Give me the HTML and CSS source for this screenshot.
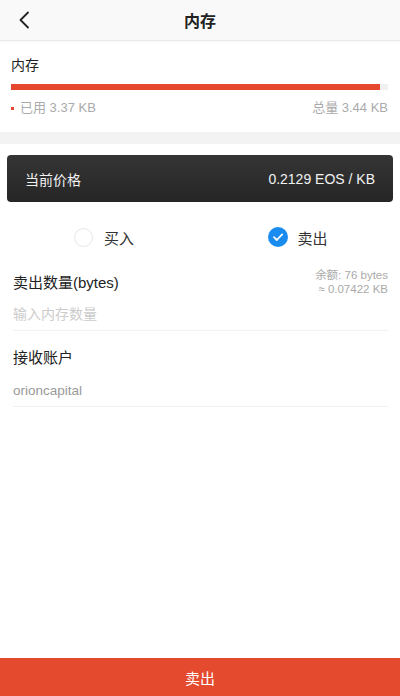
FILE: index.html
```html
<!DOCTYPE html>
<html lang="zh-CN">
<head>
    <meta charset="UTF-8">
    <meta name="viewport" content="width=device-width, initial-scale=1.0">
    <title>内存</title>
    <link rel="stylesheet" href="styles.css">
</head>
<body>
    <div class="page">
        <div class="nav">
            <span class="nav-back">
                <svg width="12" height="18" viewBox="0 0 12 18">
                    <path d="M10 1.5 L2.5 9 L10 16.5" fill="none" stroke="#222" stroke-width="1.8" stroke-linecap="round" stroke-linejoin="round"/>
                </svg>
            </span>
            <h1 class="nav-title">内存</h1>
        </div>

        <div class="memory">
            <div class="memory-label">内存</div>
            <div class="memory-bar">
                <div class="memory-used" style="width: 98%"></div>
            </div>
            <div class="memory-legend">
                <span class="used"><i class="dot"></i>已用 3.37 KB</span>
                <span>总量 3.44 KB</span>
            </div>
        </div>

        <div class="band"></div>

        <div class="price-card">
            <span>当前价格</span>
            <span>0.2129 EOS / KB</span>
        </div>

        <div class="mode">
            <label class="mode-item">
                <span class="radio"></span>
                <span>买入</span>
            </label>
            <label class="mode-item">
                <span class="radio checked">
                    <svg width="20" height="20" viewBox="0 0 20 20">
                        <path d="M6 10.2 L8.8 13 L14.2 7.4" fill="none" stroke="#fff" stroke-width="1.8" stroke-linecap="round" stroke-linejoin="round"/>
                    </svg>
                </span>
                <span>卖出</span>
            </label>
        </div>

        <div class="form">
            <div class="field">
                <div class="field-head">
                    <span class="field-label">卖出数量(bytes)</span>
                    <span class="balance">余额: 76 bytes<br>≈ 0.07422 KB</span>
                </div>
                <input class="field-input" type="text" placeholder="输入内存数量">
            </div>
            <div class="field">
                <div class="field-head">
                    <span class="field-label">接收账户</span>
                </div>
                <input class="field-input value" type="text" value="orioncapital">
            </div>
        </div>

        <button class="submit-btn">卖出</button>
    </div>
</body>
</html>
```

FILE: styles.css
```css
* {
    box-sizing: border-box;
}

body {
    margin: 0;
    font-family: "Liberation Sans", "Noto Sans CJK SC", sans-serif;
    color: #222;
    background: #fff;
}

.page {
    display: flex;
    flex-direction: column;
    height: 100vh;
}

.nav {
    height: 41px;
    display: flex;
    align-items: center;
    justify-content: center;
    position: relative;
    background: #f9f9f9;
    border-bottom: 1px solid #e9e9e9;
    box-shadow: 0 1px 2px rgba(0, 0, 0, 0.04);
}

.nav-back {
    position: absolute;
    left: 18px;
    top: 11px;
    display: flex;
}

.nav-title {
    margin: 0;
    font-size: 16px;
    font-weight: bold;
}

.memory {
    padding: 14px 12px 16px 11px;
}

.memory-label {
    font-size: 14px;
    line-height: 20px;
}

.memory-bar {
    margin-top: 9px;
    height: 6px;
    background: #f0f0f0;
}

.memory-used {
    height: 100%;
    background: #e5482f;
}

.memory-legend {
    margin-top: 10px;
    display: flex;
    justify-content: space-between;
    font-size: 13px;
    line-height: 16px;
    color: #aaa;
}

.memory-legend .used {
    display: flex;
    align-items: center;
}

.dot {
    width: 3px;
    height: 3px;
    margin-right: 6px;
    background: #e5482f;
}

.band {
    height: 12px;
    background: #f3f3f3;
}

.price-card {
    margin: 11px 7px 0;
    height: 47px;
    padding: 0 18px;
    display: flex;
    align-items: center;
    justify-content: space-between;
    background: linear-gradient(#353535, #262626);
    border-radius: 4px;
    color: #f2f2f2;
    font-size: 14px;
}

.mode {
    margin-top: 20px;
    height: 30px;
    display: flex;
}

.mode-item {
    flex: 1;
    display: flex;
    align-items: center;
    justify-content: center;
    gap: 11px;
    font-size: 15px;
    color: #333;
}

.mode-item:first-child {
    padding-left: 7px;
}

.mode-item:last-child {
    gap: 9px;
    padding-right: 5px;
}

.radio {
    width: 19px;
    height: 19px;
    border: 1px solid #e6e6e6;
    border-radius: 50%;
    display: flex;
    align-items: center;
    justify-content: center;
}

.radio.checked {
    width: 20px;
    height: 20px;
    border: none;
    background: #1a8cf0;
}

.form {
    padding: 18px 12px 0 13px;
}

.field {
    margin-bottom: 14px;
}

.field-head {
    display: flex;
    justify-content: space-between;
    align-items: flex-start;
    min-height: 28px;
}

.field-label {
    font-size: 15px;
    line-height: 22px;
    margin-top: 2px;
}

.balance {
    font-size: 11.5px;
    line-height: 14px;
    text-align: right;
    color: #aaa;
    margin-top: -2px;
}

.field-input {
    display: block;
    width: 100%;
    height: 33px;
    padding: 0;
    border: none;
    border-bottom: 1px solid #f2f2f2;
    outline: none;
    font-family: inherit;
    font-size: 14px;
    color: #999;
    background: transparent;
}

.field-input::placeholder {
    color: #ccc;
}

.field-input.value {
    height: 34px;
    padding-top: 1px;
    font-size: 13.5px;
}

.submit-btn {
    margin-top: auto;
    height: 38px;
    width: 100%;
    border: none;
    background: #e44a2e;
    color: #fff;
    font-family: inherit;
    font-size: 15px;
}
```
